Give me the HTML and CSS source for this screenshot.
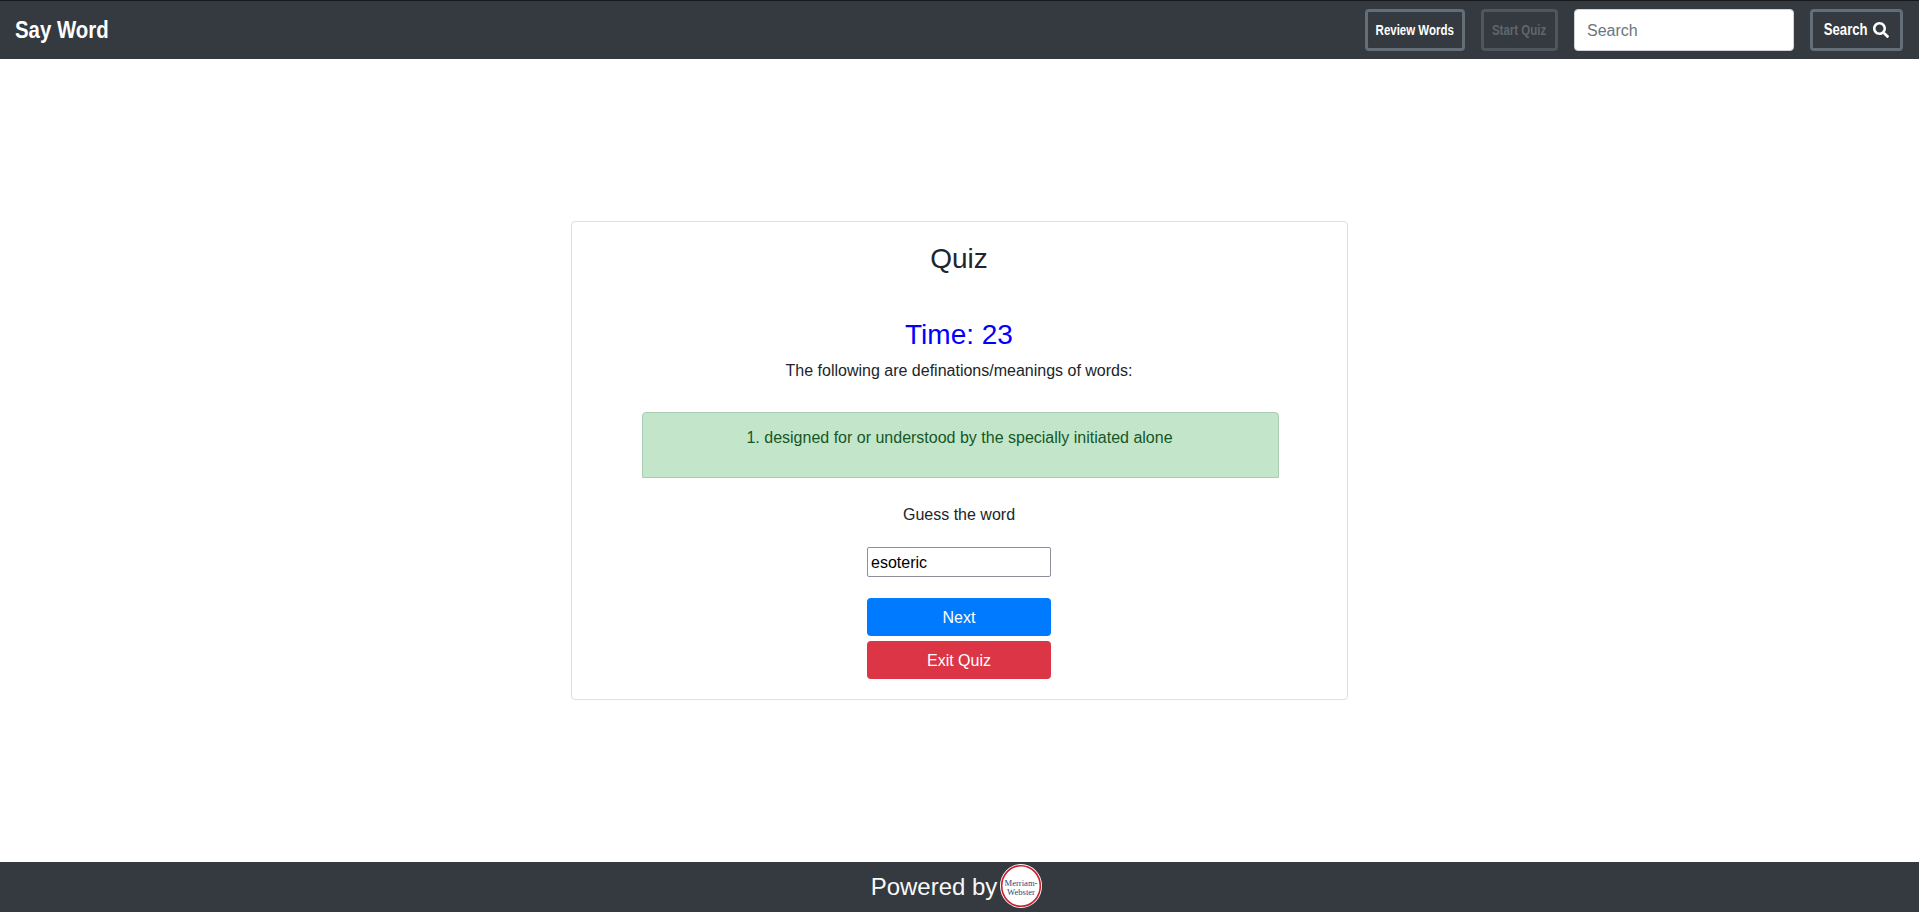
FILE: index.html
```html
<!DOCTYPE html>
<html lang="en">
<head>
<meta charset="utf-8">
<title>Say Word</title>
<link rel="stylesheet" href="styles.css">
</head>
<body>
<header class="navbar">
  <a class="brand"><span class="narrow brand-text">Say Word</span></a>
  <nav class="nav-actions">
    <button class="nav-btn review"><span class="narrow">Review Words</span></button>
    <button class="nav-btn start" disabled><span class="narrow">Start Quiz</span></button>
    <input class="search-input" type="text" placeholder="Search">
    <button class="nav-btn search"><span class="narrow search-label">Search</span>
      <svg class="search-icon" viewBox="0 0 512 512" aria-hidden="true"><path fill="currentColor" d="M505 442.700L405.300 343c-4.500-4.500-10.600-7-17-7H372c27.600-35.300 44-79.700 44-128C416 93.100 322.900 0 208 0S0 93.100 0 208s93.100 208 208 208c48.300 0 92.700-16.400 128-44v16.300c0 6.400 2.500 12.500 7 17l99.700 99.700c9.400 9.400 24.600 9.400 33.900 0l28.300-28.300c9.400-9.400 9.400-24.600.1-34zM208 336c-70.700 0-128-57.200-128-128 0-70.700 57.200-128 128-128 70.700 0 128 57.200 128 128 0 70.700-57.200 128-128 128z"/></svg>
    </button>
  </nav>
</header>
<main class="main">
  <section class="card">
    <h3 class="card-title">Quiz</h3>
    <h3 class="timer">Time: 23</h3>
    <p class="intro">The following are definations/meanings of words:</p>
    <div class="alert"><p class="definition">1. designed for or understood by the specially initiated alone</p></div>
    <p class="guess">Guess the word</p>
    <input class="answer" type="text" value="esoteric">
    <button class="btn primary">Next</button>
    <button class="btn danger">Exit Quiz</button>
  </section>
</main>
<footer class="footer">
  <span class="powered">Powered by</span>
  <svg class="logo" viewBox="0 0 42 44" role="img" aria-label="Merriam-Webster">
    <ellipse cx="21" cy="22" rx="21" ry="22" fill="#fff"/>
    <ellipse cx="21" cy="22" rx="19.300" ry="20.300" fill="#fff" stroke="#c8202f" stroke-width="1.600"/>
    <text class="logo-text" x="21" y="21.500">Merriam-</text>
    <text class="logo-text" x="21" y="30.500">Webster</text>
  </svg>
</footer>
</body>
</html>
```
FILE: styles.css
```css
* { box-sizing: border-box; }
html, body { height: 100%; }
body {
  margin: 0;
  display: flex;
  flex-direction: column;
  height: 912px;
  overflow: hidden;
  font-family: "Liberation Sans", Arial, sans-serif;
  font-size: 16px;
  line-height: 1.5;
  color: #212529;
  background: #fff;
}
.navbar {
  height: 59px;
  flex: none;
  display: flex;
  align-items: center;
  justify-content: space-between;
  padding: 0 16px 0 15px;
  background: #343a40;
  border-top: 1px solid #16181b;
}
.brand {
  font-weight: 700;
  font-size: 24px;
  line-height: 36px;
  color: #fff;
}
.narrow {
  display: inline-block;
  white-space: nowrap;
  transform: scaleX(.82);
}
.brand-text { transform: scaleX(.85); transform-origin: left center; }
.nav-actions { display: flex; align-items: center; }
.nav-btn {
  height: 42px;
  padding: 0;
  background: transparent;
  border: 3px solid #646e76;
  border-radius: 4px;
  font-family: "Liberation Sans", sans-serif;
  font-weight: 700;
  color: #fff;
  display: flex;
  align-items: center;
  justify-content: center;
}
.review { width: 100px; font-size: 14px; }
.start { width: 77px; font-size: 14px; margin-left: 16px; color: #5f666d; border-color: #50565d; }
.search { width: 93px; font-size: 16px; margin-left: 16px; gap: 5px; }
.search-label { margin: 0 -5px; }
.search-icon { width: 16px; height: 16px; }
.search-input {
  width: 220px;
  height: 42px;
  margin-left: 16px;
  padding: 8px 12px 6px;
  border: 1px solid #ced4da;
  border-radius: 4px;
  background: #fff;
  font: 16px "Liberation Sans", sans-serif;
  color: #495057;
}
.search-input::placeholder { color: #6c757d; opacity: 1; }
.main {
  flex: 1;
  display: flex;
  align-items: center;
  justify-content: center;
}
.card {
  width: 777px;
  height: 479px;
  padding: 20px 21px 20px 20px;
  display: flex;
  flex-direction: column;
  align-items: center;
  background: #fff;
  border: 1px solid #dfdfdf;
  border-radius: 4px;
  text-align: center;
}
.card-title, .timer {
  margin: 0;
  font-size: 28px;
  font-weight: 400;
  line-height: 1.2;
}
.timer { margin-top: 42px; margin-bottom: 8px; color: #0000ff; }
.intro { margin: 0; }
.alert {
  width: 637px;
  margin: 29px 0 0 3px;
  padding: 13px 22px 11px 20px;
  background: #c3e6cb;
  border: 1px solid #a9cdb3;
  border-radius: 4px 4px 0 0;
  color: #155724;
}
.definition { margin: 0 0 16px; }
.guess { margin: 25px 0 0; }
.answer {
  width: 184px;
  height: 30px;
  margin-top: 20px;
  padding: 2px 2px 0 3px;
  border: 1px solid #8f8f9d;
  border-radius: 2px;
  font: 16px "Liberation Sans", sans-serif;
  color: #000;
}
.btn {
  width: 184px;
  height: 38px;
  padding: 2px 0 0;
  border: 1px solid transparent;
  border-radius: 4px;
  font: 16px/1.5 "Liberation Sans", sans-serif;
  color: #fff;
}
.primary { margin-top: 21px; background: #007bff; }
.danger { margin-top: 5px; background: #dc3545; }
.footer {
  height: 50px;
  flex: none;
  display: flex;
  align-items: center;
  justify-content: center;
  padding-right: 6px;
  background: #343a40;
  color: #f8f9fa;
}
.powered { font-size: 24px; line-height: 36px; }
.logo { width: 42px; height: 44px; margin: 0 0 2px 3px; }
.logo-text {
  font-family: "Liberation Serif", serif;
  font-size: 8.600px;
  text-anchor: middle;
  fill: #24478a;
}
```
